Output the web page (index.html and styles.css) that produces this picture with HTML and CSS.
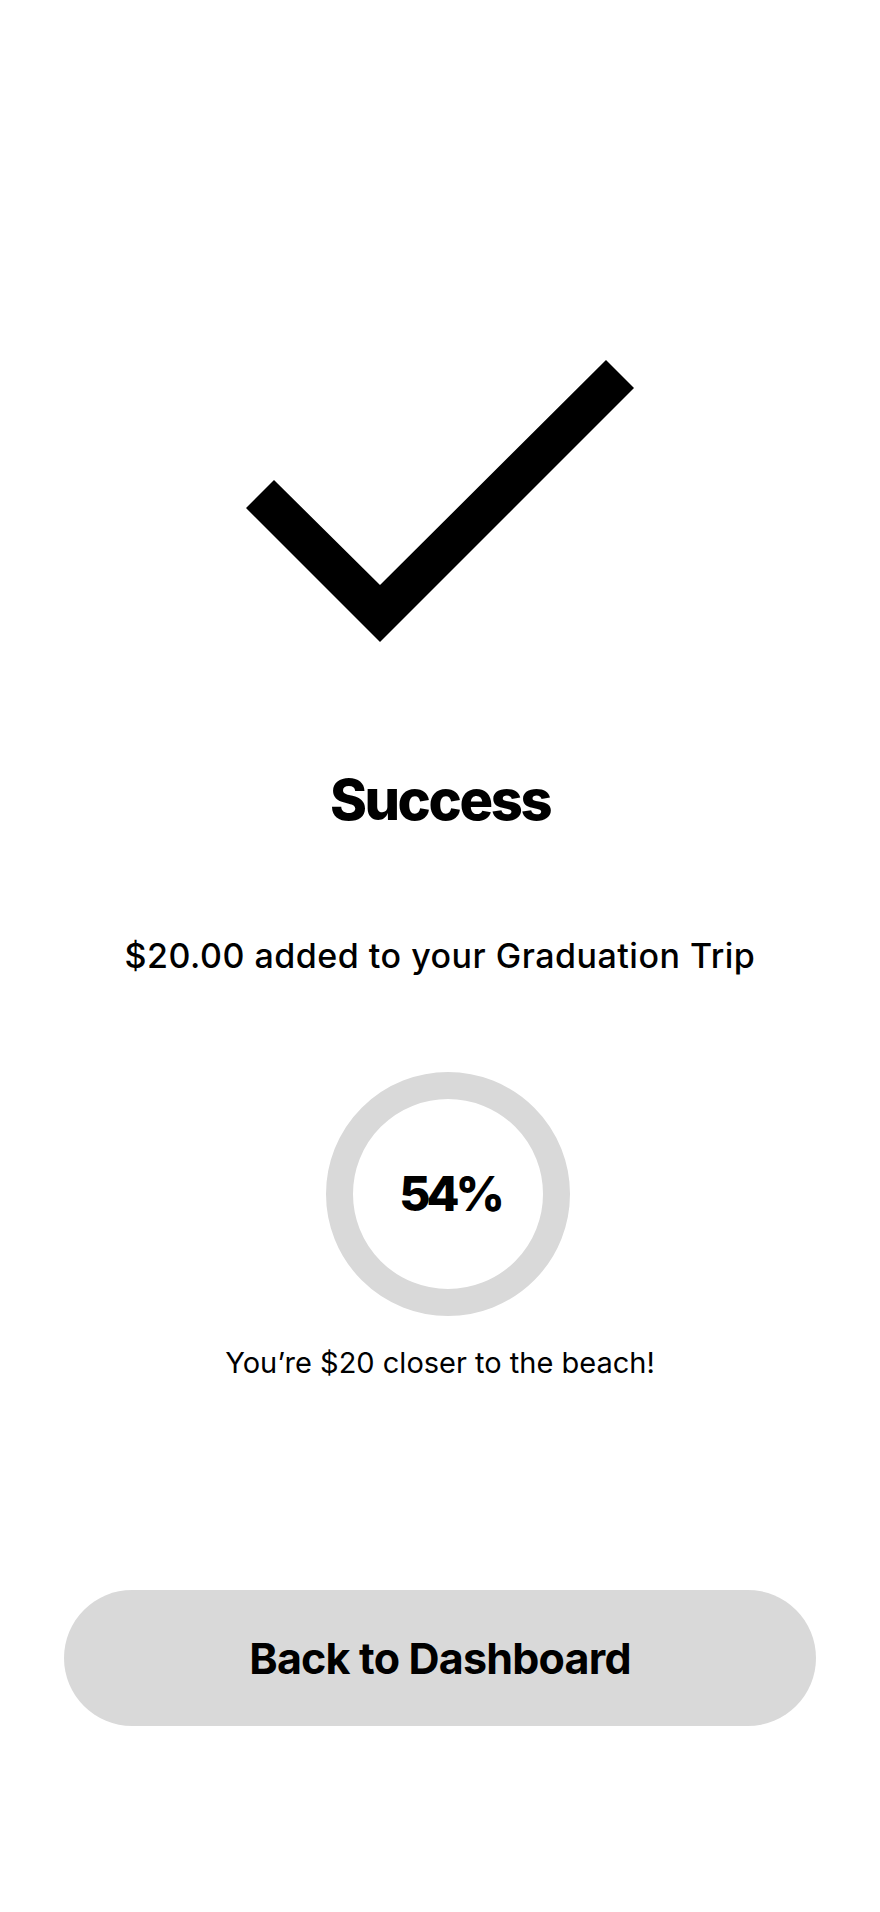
FILE: index.html
```
<!DOCTYPE html>
<html>
  <head>
    <title>Success</title>
    <meta name="viewport" content="width=device-width, initial-scale=1">
    <link rel="stylesheet" href="styles.css">
  </head>
  <body>
    <main class="success">
      <svg class="check" viewBox="246 360 388 282" width="388" height="282" aria-hidden="true">
        <polygon points="246,508 274,480 380,585 606,360 634,388 380,642" fill="#000"/>
      </svg>

      <h1 class="title">Success</h1>
      <p class="amount">$20.00 added to your Graduation Trip</p>

      <div class="progress">
        <span class="progress-value">54%</span>
      </div>
      <p class="caption">You’re $20 closer to the beach!</p>

      <button class="back-button" type="button">Back to Dashboard</button>
    </main>
  </body>
</html>
```
FILE: styles.css
```
body {
    margin: 0;
    background: #fff;
    color: #000;
    font-family: Inter, "Noto Sans", sans-serif;
}

.success {
    display: flex;
    flex-direction: column;
    align-items: center;
    padding-top: 360px;
    padding-bottom: 186px;
}

.check {
    display: block;
}

.title {
    margin: 130px 0 0;
    font-size: 56px;
    font-weight: 800;
    line-height: 1;
    letter-spacing: -2.4px;
}

.amount {
    margin: 111px 0 0;
    font-size: 34px;
    font-weight: 500;
    line-height: 1;
    letter-spacing: 0.5px;
}

.progress {
    margin: 99px 0 0 16px;
    width: 244px;
    height: 244px;
    box-sizing: border-box;
    border: 27px solid #d9d9d9;
    border-radius: 50%;
    display: flex;
    justify-content: center;
    align-items: center;
}

.progress-value {
    font-size: 48px;
    font-weight: 800;
    line-height: 1;
    letter-spacing: -4px;
    margin-right: -4px;
}

.caption {
    margin: 32px 0 0;
    font-size: 29px;
    font-weight: 400;
    line-height: 1;
}

.back-button {
    margin-top: 213px;
    width: 752px;
    height: 136px;
    border: none;
    border-radius: 68px;
    background: #d9d9d9;
    color: #000;
    font-family: inherit;
    font-size: 43px;
    font-weight: 700;
    letter-spacing: -0.8px;
    cursor: pointer;
}
```
